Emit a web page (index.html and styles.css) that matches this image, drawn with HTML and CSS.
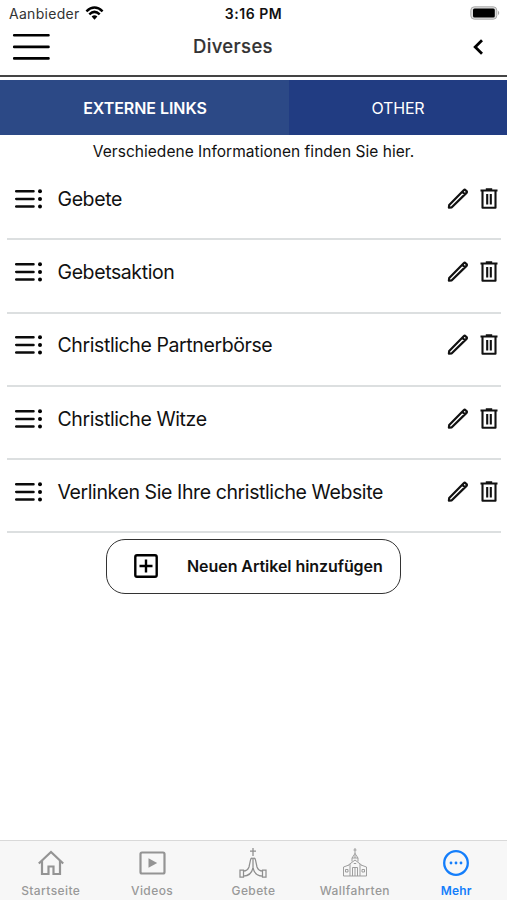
FILE: index.html
```html
<!DOCTYPE html>
<html lang="de">
<head>
<meta charset="utf-8">
<title>Diverses</title>
<link rel="stylesheet" href="styles.css">
</head>
<body>
<svg class="defs" aria-hidden="true">
  <symbol id="list" viewBox="0 0 28 20"><path d="M1.2 2.2H18.500M1.2 9.9H18.500M1.2 17.6H18.500" fill="none" stroke="#0b0b0b" stroke-width="2.5" stroke-linecap="round"/><circle cx="25" cy="2.2" r="2"/><circle cx="25" cy="9.9" r="2"/><circle cx="25" cy="17.6" r="2"/></symbol>
  <symbol id="pencil" viewBox="0 0 22 22"><path d="M2.200 17 16.700 2.200Q17.700 1.300 18.600 2.200L19.500 3.100Q20.300 4 19.500 4.900L4.800 19.300 1.900 19.700ZM15.300 3.800 17.800 6.300" fill="none" stroke="#111" stroke-width="2.200" stroke-linejoin="round"/></symbol>
  <symbol id="trash" viewBox="0 0 18 22"><path d="M.5 2.500H17.500M5.800 1.400H12.200M2.500 2.500V19.800H15.500V2.500M7.200 6V16.500M10.800 6V16.500" fill="none" stroke="#111" stroke-width="2.100" stroke-linejoin="round"/></symbol>
</svg>
<div class="app">
  <div class="status">
    <div class="carrier"><span>Aanbieder</span>
      <svg width="19" height="14" viewBox="0 0 19 14"><path d="M1.400 5.300Q9.500-2.200 17.600 5.300M4.300 8.300Q9.500 3.500 14.700 8.300" fill="none" stroke="#000" stroke-width="2.500"/><path d="M6.600 10.600Q9.500 8 12.400 10.600L9.500 13.700Z"/></svg>
    </div>
    <div class="time">3:16 PM</div>
    <svg class="battery" width="30" height="14" viewBox="0 0 30 14"><rect x=".8" y=".8" width="26" height="12.400" rx="3.500" fill="#ddd" stroke="#aaa"/><rect x="3" y="2.500" width="21.800" height="9" rx="1.500"/><path d="M28 4.800Q30.500 7 28 9.200Z" fill="#aaa"/></svg>
  </div>
  <header class="header">
    <svg width="38" height="28" viewBox="0 0 38 28"><path d="M2.200 2.300H36.500M2.200 13.900H36.500M2.200 25.400H36.500" stroke="#000" stroke-width="2.600" stroke-linecap="round"/></svg>
    <h1>Diverses</h1>
    <svg width="11" height="16" viewBox="0 0 11 16"><path d="M9 1.300 2.200 8 9 14.700" fill="none" stroke="#000" stroke-width="2.800"/></svg>
  </header>
  <nav class="tabs"><div class="tab active"><span>EXTERNE LINKS</span></div><div class="tab other"><span>OTHER</span></div></nav>
  <p class="intro"><span>Verschiedene Informationen finden Sie hier.</span></p>
  <ul class="list">
    <li><svg class="li"><use href="#list"/></svg><span class="name">Gebete</span><svg class="pen"><use href="#pencil"/></svg><svg class="bin"><use href="#trash"/></svg></li>
    <li><svg class="li"><use href="#list"/></svg><span class="name">Gebetsaktion</span><svg class="pen"><use href="#pencil"/></svg><svg class="bin"><use href="#trash"/></svg></li>
    <li><svg class="li"><use href="#list"/></svg><span class="name">Christliche Partnerbörse</span><svg class="pen"><use href="#pencil"/></svg><svg class="bin"><use href="#trash"/></svg></li>
    <li><svg class="li"><use href="#list"/></svg><span class="name">Christliche Witze</span><svg class="pen"><use href="#pencil"/></svg><svg class="bin"><use href="#trash"/></svg></li>
    <li><svg class="li"><use href="#list"/></svg><span class="name">Verlinken Sie Ihre christliche Website</span><svg class="pen"><use href="#pencil"/></svg><svg class="bin"><use href="#trash"/></svg></li>
  </ul>
  <button class="add"><svg width="24" height="24" viewBox="0 0 24 24"><path d="M3 1.300H21Q22.700 1.300 22.700 3V21Q22.700 22.700 21 22.700H3Q1.300 22.700 1.300 21V3Q1.300 1.300 3 1.300ZM12 5.500V18.500M5.500 12H18.500" fill="none" stroke="#000" stroke-width="2.400"/></svg><span>Neuen Artikel hinzufügen</span></button>
  <nav class="bottom">
    <div class="item"><svg width="28" height="28" viewBox="0 0 28 28"><path d="M1.800 14.500 14 3 26.200 14.500M5 12V25H11.500V17.500H16.500V25H23V12" fill="none" stroke="#949494" stroke-width="2.200"/></svg><span>Startseite</span></div>
    <div class="item"><svg width="28" height="28" viewBox="0 0 28 28"><rect x="2.500" y="3.500" width="24" height="21" rx="1.500" fill="none" stroke="#949494" stroke-width="2.200"/><path d="M10.500 9.200V18.800L19.200 14Z" fill="#949494"/></svg><span>Videos</span></div>
    <div class="item"><svg width="28" height="32" viewBox="0 0 28 32"><path d="M14 1V9M11 4H17M14 11V21M14 11.500Q12 10.500 11.500 13L10 20Q8.500 24 4.500 24M14 11.500Q16 10.500 16.500 13L18 20Q19.500 24 23.500 24M14 21Q12 29 4.500 29M14 21Q16 29 23.500 29M1 23H4.500V30H1ZM23.500 23H27V30H23.500Z" fill="none" stroke="#8e8e8e" stroke-width="1.250"/></svg><span>Gebete</span></div>
    <div class="item"><svg width="28" height="32" viewBox="0 0 28 32"><path d="M14 1V7M12.500 3H15.500M11 11 14 6.500 17 11ZM11 11V14.500M17 11V14.500M7.500 18 14 13 20.500 18M9 17V29M19 17V29M8 18 2.500 20V29H25.500V20L20 18M11.500 29V20.500H16.500V29M14 20.500V29M4.500 25V22.500H7V25ZM21 25V22.500H23.500V25ZM12.800 16.500H15.200M14 8V11" fill="none" stroke="#999" stroke-width=".95"/></svg><span>Wallfahrten</span></div>
    <div class="item current"><svg width="28" height="28" viewBox="0 0 28 28"><circle cx="14" cy="14" r="11.800" fill="none" stroke="#147efb" stroke-width="2.300"/><circle cx="9" cy="14" r="1.400" fill="#147efb"/><circle cx="14" cy="14" r="1.400" fill="#147efb"/><circle cx="19" cy="14" r="1.400" fill="#147efb"/></svg><span>Mehr</span></div>
  </nav>
</div>
</body>
</html>
```
FILE: styles.css
```css
* { box-sizing: border-box; }
body { margin: 0; background: #fff; font-family: Inter, "Liberation Sans", sans-serif; color: #111; }
svg { display: block; flex: none; }
.defs { display: none; }
.app { width: 507px; height: 900px; display: flex; flex-direction: column; overflow: hidden; }
.status { height: 27px; flex: none; display: grid; grid-template-columns: 1fr auto 1fr; align-items: center; padding: 0 7px 0 9px; font-size: 14px; }
.carrier { display: flex; align-items: center; gap: 5px; color: #333; letter-spacing: .3px; }
.carrier svg { margin-top: -1px; }
.time { font-weight: 600; color: #111; letter-spacing: .55px; margin-right: 2px; }
.battery { justify-self: end; margin-top: -1px; }
.header { height: 49.500px; flex: none; border-bottom: 2px solid #444; display: grid; grid-template-columns: 60px 1fr 60px; align-items: center; padding: 0 23px 8px 12px; }
.header h1 { margin: -1px 0 0; text-align: center; font-size: 18.500px; font-weight: 500; letter-spacing: .35px; color: #333; padding-right: 30px; -webkit-text-stroke: .15px #333; }
.header svg:last-child { justify-self: end; }
.tabs { height: 55px; flex: none; margin-top: 3.500px; display: grid; grid-template-columns: 289px 1fr; color: #fff; font-size: 16px; }
.tab { display: flex; align-items: center; justify-content: center; background: #213c82; }
.other { letter-spacing: -.2px; }
.active { background: #2c4986; font-weight: 600; letter-spacing: -.05px; padding-left: 1px; }
.intro { margin: 0; height: 32px; flex: none; display: flex; align-items: center; justify-content: center; font-size: 15.500px; letter-spacing: .03px; }
.list { margin: 0; padding: 0 6px 0 7px; list-style: none; flex: none; }
.list li { height: 73.300px; border-bottom: 2px solid #dcdfe0; display: flex; align-items: center; padding: 0 3.500px 7.500px 8px; }
.li { width: 28px; height: 20px; margin-right: 14.500px; }
.name { flex: 1; font-size: 19.500px; letter-spacing: -.4px; white-space: nowrap; }
.pen { width: 22px; height: 22px; margin-right: 11px; }
.bin { width: 18px; height: 22px; }
.add { width: 295px; height: 55px; flex: none; margin: 6px 0 0 106px; border: 1.500px solid #333; border-radius: 19px; background: #fff; display: flex; align-items: center; padding: 0 0 1px 27px; gap: 29px; font: 600 16px Inter, "Liberation Sans", sans-serif; letter-spacing: -.06px; color: #111; }
.add span { white-space: nowrap; }
.bottom { margin-top: auto; height: 60px; flex: none; border-top: 1px solid #d9d9d9; background: #f7f7f7; display: grid; grid-template-columns: repeat(5, 1fr); color: #999; font-size: 12px; font-weight: 500; letter-spacing: .4px; }
.item { display: grid; grid-template-rows: 43px 14px; justify-items: center; align-items: center; line-height: 14px; }
.current { color: #147efb; font-weight: 600; letter-spacing: .2px; }
```
